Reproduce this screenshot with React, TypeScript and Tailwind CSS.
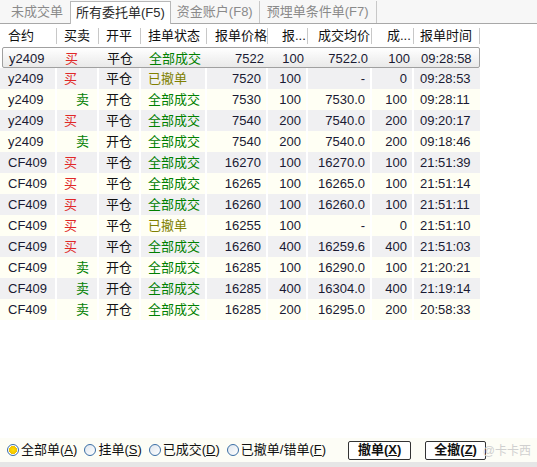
import React from 'react';

type Order = {
  code: string;
  side: '买' | '卖';
  offset: string;
  status: string;
  price: number;
  qty: number;
  avg: string;
  filled: number;
  time: string;
};

const orders: Order[] = [
  { code: 'y2409', side: '买', offset: '平仓', status: '全部成交', price: 7522, qty: 100, avg: '7522.0', filled: 100, time: '09:28:58' },
  { code: 'y2409', side: '买', offset: '平仓', status: '已撤单', price: 7520, qty: 100, avg: '-', filled: 0, time: '09:28:53' },
  { code: 'y2409', side: '卖', offset: '开仓', status: '全部成交', price: 7530, qty: 100, avg: '7530.0', filled: 100, time: '09:28:11' },
  { code: 'y2409', side: '买', offset: '平仓', status: '全部成交', price: 7540, qty: 200, avg: '7540.0', filled: 200, time: '09:20:17' },
  { code: 'y2409', side: '卖', offset: '开仓', status: '全部成交', price: 7540, qty: 200, avg: '7540.0', filled: 200, time: '09:18:46' },
  { code: 'CF409', side: '买', offset: '平仓', status: '全部成交', price: 16270, qty: 100, avg: '16270.0', filled: 100, time: '21:51:39' },
  { code: 'CF409', side: '买', offset: '平仓', status: '全部成交', price: 16265, qty: 100, avg: '16265.0', filled: 100, time: '21:51:14' },
  { code: 'CF409', side: '买', offset: '平仓', status: '全部成交', price: 16260, qty: 100, avg: '16260.0', filled: 100, time: '21:51:11' },
  { code: 'CF409', side: '买', offset: '平仓', status: '已撤单', price: 16255, qty: 100, avg: '-', filled: 0, time: '21:51:10' },
  { code: 'CF409', side: '买', offset: '平仓', status: '全部成交', price: 16260, qty: 400, avg: '16259.6', filled: 400, time: '21:51:03' },
  { code: 'CF409', side: '卖', offset: '开仓', status: '全部成交', price: 16285, qty: 100, avg: '16290.0', filled: 100, time: '21:20:21' },
  { code: 'CF409', side: '卖', offset: '开仓', status: '全部成交', price: 16285, qty: 400, avg: '16304.0', filled: 400, time: '21:19:14' },
  { code: 'CF409', side: '卖', offset: '开仓', status: '全部成交', price: 16285, qty: 200, avg: '16295.0', filled: 200, time: '20:58:33' },
];

const headers = [
  { label: '合约', cls: 'w-[57px] pl-[8px]' },
  { label: '买卖', cls: 'w-[42px] pl-[7px]' },
  { label: '开平', cls: 'w-[42px] pl-[7px]' },
  { label: '挂单状态', cls: 'w-[66px] pl-[7px]' },
  { label: '报单价格', cls: 'w-[61px] pl-[8px]' },
  { label: '报...', cls: 'w-[40px] pl-[14px]' },
  { label: '成交均价', cls: 'w-[64px] pl-[10px]' },
  { label: '成...', cls: 'w-[42px] pl-[15px]' },
  { label: '报单时间', cls: 'w-[66px] pl-[6px]' },
];

const Radio = ({ checked, label, hot }: { checked?: boolean; label: string; hot: string }) => (
  <label className="flex shrink-0 items-center gap-[2px] whitespace-nowrap">
    <span
      className={
        checked
          ? 'h-[12px] w-[12px] shrink-0 rounded-full border border-[#3a6ea5] bg-[radial-gradient(circle,#ffe000_0%,#f0c000_55%,#fff_60%)]'
          : 'h-[12px] w-[12px] shrink-0 rounded-full border border-[#3a6ea5] bg-gradient-to-br from-[#dfe6ee] to-white'
      }
    />
    <span>
      {label}(<span className="underline">{hot}</span>)
    </span>
  </label>
);

export default function App() {
  return (
    <div
      className="relative flex h-[467px] w-[537px] flex-col overflow-hidden bg-white text-[13px] text-[#1a1a33]"
      style={{ fontFamily: '"Liberation Sans", "Noto Sans CJK SC", sans-serif' }}
    >
      {/* tabs */}
      <div className="flex h-[24px] items-end whitespace-nowrap border-b border-[#a8a8a8] bg-[#f7f7f7] pl-[4px] text-[#8a8a8a]">
        <div className="flex h-[22px] items-center px-[7px]">未成交单</div>
        <div className="-mb-px flex h-[23px] items-center border border-b-0 border-[#b8b8b8] bg-white px-[5px] text-[#2a2a2a]">
          所有委托单(F5)
        </div>
        <div className="flex h-[22px] items-center border-r border-[#c8c8c8] px-[6px]">资金账户(F8)</div>
        <div className="flex h-[22px] items-center border-r border-[#c8c8c8] px-[7px]">预埋单条件单(F7)</div>
      </div>

      {/* header */}
      <div className="flex h-[23px] items-center whitespace-nowrap pt-[1px] text-[#111]">
        {headers.map((h) => (
          <div key={h.label} className={`${h.cls} flex h-[16px] shrink-0 items-center border-r border-[#c8c8c8]`}>
            {h.label}
          </div>
        ))}
      </div>

      {/* rows */}
      <div className="flex flex-col whitespace-nowrap">
        {orders.map((o, i) => {
          const selected = i === 0;
          const bg = selected
            ? 'mx-[2px] w-[478px] rounded-[2px] border border-[#a0a0a0] bg-gradient-to-b from-white to-[#e9e9e9]'
            : i % 2 === 1
              ? 'w-[480px] bg-[#f0f0f2]'
              : 'w-[480px] bg-[#fffff4]';
          const cell = selected ? '' : 'border-r-2 border-white';
          return (
            <div key={i} className={`flex h-[21px] items-center ${bg}`}>
              <div className={`${selected ? 'w-[55px] pl-[6px]' : 'w-[57px] pl-[8px]'} h-full leading-[21px] ${cell}`}>{o.code}</div>
              <div
                className={`w-[42px] h-full leading-[21px] ${cell} ${
                  o.side === '买' ? 'pl-[7px] text-[#e02828]' : 'pl-[19px] text-[#008000]'
                }`}
              >
                {o.side}
              </div>
              <div className={`w-[42px] h-full pl-[7px] leading-[21px] text-[#111] ${cell}`}>{o.offset}</div>
              <div
                className={`w-[66px] h-full pl-[7px] leading-[21px] ${cell} ${
                  o.status === '已撤单' ? 'text-[#808000]' : 'text-[#008000]'
                }`}
              >
                {o.status}
              </div>
              <div className={`w-[61px] h-full pr-[5px] text-right leading-[21px] ${cell}`}>{o.price}</div>
              <div className={`w-[40px] h-full pr-[5px] text-right leading-[21px] ${cell}`}>{o.qty}</div>
              <div className={`w-[64px] h-full pr-[5px] text-right leading-[21px] ${cell}`}>{o.avg}</div>
              <div className={`w-[42px] h-full pr-[5px] text-right leading-[21px] ${cell}`}>{o.filled}</div>
              <div className="w-[64px] h-full pl-[6px] leading-[21px]">{o.time}</div>
            </div>
          );
        })}
      </div>

      <div className="flex-1" />

      {/* bottom bar */}
      <div className="relative flex h-[24px] items-center whitespace-nowrap bg-[#fdfdf6] pl-[7px] text-[#111]">
        <div className="flex shrink-0 items-center gap-[7px]">
          <Radio checked label="全部单" hot="A" />
          <Radio label="挂单" hot="S" />
          <Radio label="已成交" hot="D" />
          <Radio label="已撤单/错单" hot="F" />
        </div>
        <button className="ml-[22px] flex h-[19px] w-[63px] shrink-0 items-center justify-center rounded-[2px] border border-[#333] bg-white font-bold">
          撤单(<span className="underline">X</span>)
        </button>
        <button className="ml-[14px] flex h-[19px] w-[61px] shrink-0 items-center justify-center rounded-[2px] border border-[#333] bg-white font-bold">
          全撤(<span className="underline">Z</span>)
        </button>
        <span className="pointer-events-none absolute right-[6px] top-[4px] text-[12px] text-[#d0d0d0]">@卡卡西</span>
      </div>
      <div className="h-[5px] bg-[#e6e6e6]" />
    </div>
  );
}
